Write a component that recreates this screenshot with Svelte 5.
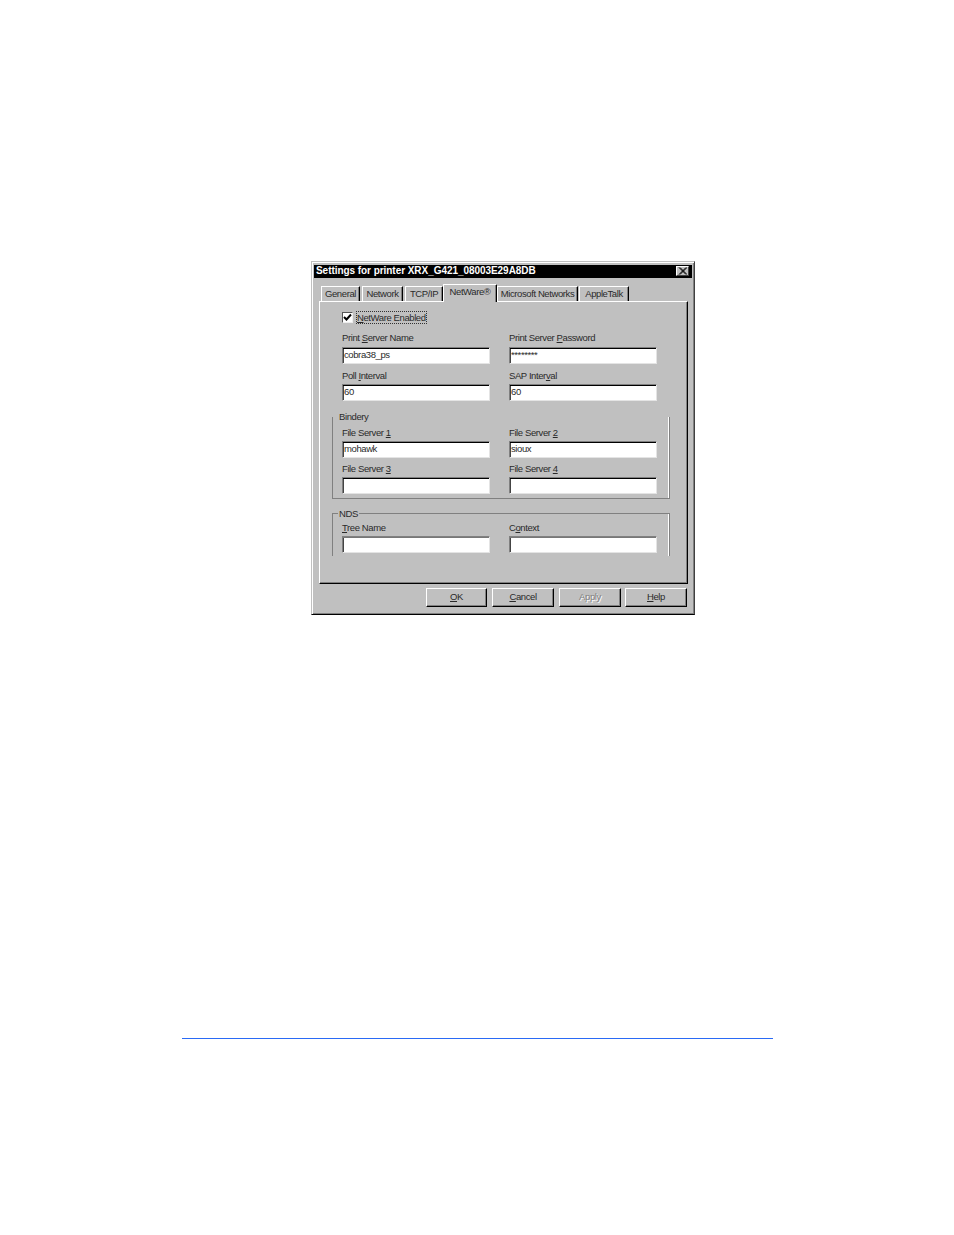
<script>
  const tabs = [
    { label: 'General', w: 39 },
    { label: 'Network', w: 41 },
    { label: 'TCP/IP', w: 38 },
    { label: 'NetWare®', w: 54, active: true },
    { label: 'Microsoft Networks', w: 81 },
    { label: 'AppleTalk', w: 50 }
  ];
  const buttons = ['OK', 'Cancel', 'Apply', 'Help'];
</script>

<div class="page">
  <div class="dialog">
    <div class="title">
      <span>Settings for printer XRX_G421_08003E29A8DB</span>
      <span class="close" aria-label="Close">
        <svg width="9" height="8" viewBox="0 0 9 8"><path d="M1 0.5 L8 7.5 M2 0.5 L9 7.5 M8 0.5 L1 7.5 M9 0.5 L2 7.5" stroke="#000" stroke-width="1" fill="none"/></svg>
      </span>
    </div>

    <div class="tabs">
      {#each tabs as t}
        <div class="tab" class:active={t.active} style="width:{t.w}px">{t.label}</div>
      {/each}
    </div>

    <div class="panel">
      <div class="check-row">
        <span class="check">
          <svg width="9" height="9" viewBox="0 0 9 9"><path d="M1 4 L3.5 6.5 L8 1.5" stroke="#000" stroke-width="2" fill="none"/></svg>
        </span>
        <span class="focus"><u>N</u>etWare Enabled</span>
      </div>

      <div class="fields top">
        <div class="field"><label>Print <u>S</u>erver Name</label><div class="input">cobra38_ps</div></div>
        <div class="field"><label>Print Server <u>P</u>assword</label><div class="input">********</div></div>
        <div class="field"><label>Poll <u>I</u>nterval</label><div class="input">60</div></div>
        <div class="field"><label>SAP Inter<u>v</u>al</label><div class="input">60</div></div>
      </div>

      <div class="group bindery">
        <div class="legend">Bindery</div>
        <div class="fields">
          <div class="field"><label>File Server <u>1</u></label><div class="input">mohawk</div></div>
          <div class="field"><label>File Server <u>2</u></label><div class="input">sioux</div></div>
          <div class="field"><label>File Server <u>3</u></label><div class="input"></div></div>
          <div class="field"><label>File Server <u>4</u></label><div class="input"></div></div>
        </div>
      </div>

      <div class="group nds">
        <div class="legend">NDS</div>
        <div class="fields">
          <div class="field"><label><u>T</u>ree Name</label><div class="input"></div></div>
          <div class="field"><label>C<u>o</u>ntext</label><div class="input"></div></div>
        </div>
      </div>
    </div>

    <div class="buttons">
      {#each buttons as b}
        <div class="btn" class:disabled={b === 'Apply'}>
          {#if b === 'OK'}<u>O</u>K{:else if b === 'Cancel'}<u>C</u>ancel{:else if b === 'Apply'}Apply{:else}<u>H</u>elp{/if}
        </div>
      {/each}
    </div>
  </div>

  <div class="rule"></div>
</div>

<style>
  :global(body) { margin: 0; background: #fff; }
  .page { width: 954px; height: 1235px; padding-top: 261px; box-sizing: border-box; overflow: hidden; font-family: "Liberation Sans", Arial, sans-serif; font-size: 9.5px; letter-spacing: -0.4px; color: #2a2a2a; }
  .dialog { box-sizing: border-box; width: 384px; height: 354px; margin-left: 311px; background: #c0c0c0; border: 1px solid; border-color: #c0c0c0 #404040 #000 #c0c0c0; box-shadow: inset 1px 1px 0 #fff, inset -1px -1px 0 #808080; padding: 3px 2px 0 2px; }
  .title { height: 13px; background: #000; color: #fff; font-size: 10px; font-weight: bold; letter-spacing: -0.05px; display: flex; justify-content: space-between; padding: 0 3px 0 2px; line-height: 12px; }
  .close { box-sizing: border-box; width: 13px; height: 10px; margin-top: 1px; background: #c0c0c0; display: flex; align-items: center; justify-content: center; border: 1px solid; border-color: #fff #404040 #404040 #fff; }
  .tabs { display: flex; align-items: flex-end; height: 20px; margin: 3px 0 0 7px; position: relative; z-index: 1; }
  .tab { box-sizing: border-box; height: 15px; line-height: 13px; text-align: center; background: #c0c0c0; border: 1px solid; border-bottom: 0; border-color: #fff #000 #000 #fff; box-shadow: inset -1px 0 0 #808080; margin-right: 2px; white-space: nowrap; }
  .tab:nth-child(5) { margin-right: 1px; }
  .tab.active { height: 18px; margin: 0 0 -1px -2px; padding-bottom: 2px; line-height: 13px; border-radius: 1px 1px 0 0; }
  .panel { box-sizing: border-box; width: 369px; height: 283px; margin-left: 5px; border: 1px solid; border-color: #fff #000 #000 #fff; box-shadow: inset -1px -1px 0 #808080; padding: 9px 0 0 22px; }
  .check-row { display: flex; align-items: center; height: 13px; gap: 3px; }
  .check { box-sizing: border-box; width: 11px; height: 11px; background: #fff; border: 1px solid; border-color: #555 #eee #eee #555; display: flex; align-items: center; justify-content: center; }
  .focus { border: 1px dotted #333; line-height: 11px; white-space: nowrap; }
  .fields { display: grid; grid-template-columns: 148px 148px; column-gap: 19px; width: 315px; }
  .top { margin-top: 8px; row-gap: 5px; }
  .field { display: flex; flex-direction: column; }
  label { height: 15px; line-height: 13px; white-space: nowrap; }
  .top .field:nth-child(-n+2) label { line-height: 12px; }
  .input { box-sizing: border-box; height: 17px; background: #fff; border: 1px solid; border-color: #808080 #e4e4e4 #e4e4e4 #808080; box-shadow: inset 0 1px 0 #000, inset 1px 0 0 #444; padding-left: 1px; line-height: 14px; }
  .group { box-sizing: border-box; position: relative; width: 338px; margin-left: -10px; padding: 0 0 0 9px; border: 1px solid #808080; box-shadow: inset -1px 0 0 #fff; }
  .legend { position: absolute; left: 5px; top: -6px; line-height: 12px; background: #c0c0c0; padding: 0 1px; }
  .bindery { margin-top: 16px; height: 82px; border-top: 0; padding-top: 9px; }
  .bindery .fields { row-gap: 4px; }
  .nds { margin-top: 14px; height: 43px; border-bottom: 0; padding-top: 7px; }
  .nds .input { box-shadow: inset 0 1px 0 #777, inset 1px 0 0 #444; }
  .buttons { display: flex; gap: 5px; justify-content: flex-end; margin: 4px 5px 0 0; }
  .btn { box-sizing: border-box; width: 62px; height: 19px; line-height: 16px; text-align: center; border: 1px solid; border-color: #fff #000 #000 #fff; box-shadow: inset -1px -1px 0 #808080; }
  .btn:first-child { width: 61px; }
  .btn:last-child { margin-left: -1px; }
  .btn.disabled { color: #808080; text-shadow: 1px 1px 0 #fff; }
  .rule { width: 591px; height: 1px; margin: 423px 0 0 182px; background: #2a6af5; }
</style>
